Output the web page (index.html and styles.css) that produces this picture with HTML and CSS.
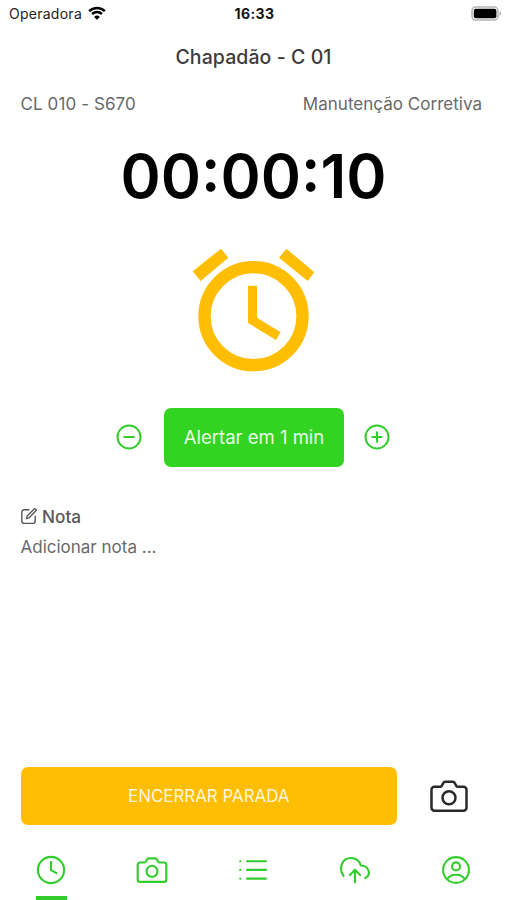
FILE: index.html
```html
<!DOCTYPE html>
<html lang="pt-BR">
<head>
<meta charset="utf-8">
<meta name="viewport" content="width=device-width, initial-scale=1">
<title>Chapadão - C 01</title>
<link rel="stylesheet" href="styles.css">
</head>
<body>
<div class="screen">
  <div class="status">
    <div class="carrier"><span class="carrier-name">Operadora</span>
      <svg class="wifi" viewBox="0 0 18 14"><path d="M1.2 5.1a11.2 11.2 0 0 1 15.6 0M4.1 8a7 7 0 0 1 9.8 0" fill="none" stroke="#000" stroke-width="2.5"/><path d="M9 13.8 6.1 10.9a4.2 4.2 0 0 1 5.8 0z"/></svg>
    </div>
    <span class="time">16:33</span>
    <svg class="battery" viewBox="0 0 31 15"><rect x="1" y="1" width="26" height="13" rx="3.8" fill="#fff" stroke="#b5b5b5" stroke-width="1.5"/><rect x="2.8" y="2.8" width="22.6" height="9.4" rx="2"/><path d="M28.5 5.3c2 .6 2 3.8 0 4.4z" fill="#aaa"/></svg>
  </div>
  <h1 class="title">Chapadão - C 01</h1>
  <div class="info"><span class="machine">CL 010 - S670</span><span class="kind">Manutenção Corretiva</span></div>
  <div class="timer">00:00:10</div>
  <svg class="alarm" viewBox="0 0 450 450"><circle cx="220.5" cy="243.5" r="147" fill="none" stroke="#ffbd03" stroke-width="37"/><path fill="#ffbd03" d="M204 152h27v96l71 44-14 23-84-51zM123 41l22 27-83 70-24-29zM319 41l84 71-20 26-86-70z"/></svg>
  <div class="alert">
    <svg class="step" viewBox="0 0 26 26"><circle cx="13" cy="13" r="11.5"/><path d="M8.2 13h9.6"/></svg>
    <button class="alert-button"><span class="alert-label">Alertar em 1 min</span></button>
    <svg class="step" viewBox="0 0 26 26"><circle cx="13" cy="13" r="11.5"/><path d="M8.2 13h9.6M13 8.2v9.6"/></svg>
  </div>
  <div class="note">
    <svg class="edit" viewBox="0 0 18 18"><path d="M9 2.8H4.2A2.4 2.4 0 0 0 1.8 5.2V14a2.4 2.4 0 0 0 2.4 2.4h8.6a2.4 2.4 0 0 0 2.4-2.4V9.3"/><path d="M7.1 9.1 13.9 2.3a1.25 1.25 0 0 1 1.8 1.8L8.9 10.9l-2.5.7z"/></svg>
    <span class="note-title">Nota</span>
  </div>
  <div class="note-text">Adicionar nota ...</div>
  <div class="actions">
    <button class="stop"><span class="stop-label">ENCERRAR PARADA</span></button>
    <svg class="photo" viewBox="0 0 38 32"><path d="M4.5 6.8h5.7q1 0 1.5-.9l1.7-3q.6-1.1 1.7-1.1h7.8q1.1 0 1.7 1.1l1.7 3q.5.9 1.5.9h5.7a3 3 0 0 1 3 3v17.9a3 3 0 0 1-3 3h-29a3 3 0 0 1-3-3V9.8a3 3 0 0 1 3-3z"/><circle cx="19" cy="17.7" r="6.5"/></svg>
  </div>
  <nav class="tabs">
    <div class="tab active"><svg class="icon" viewBox="0 0 32 32"><circle cx="16" cy="16" r="13.1"/><path d="M16 8v8.2l5.4 3"/></svg></div>
    <div class="tab"><svg class="icon" viewBox="0 0 32 32"><path d="M3.9 8.5h4.2q1.3 0 1.9-1.1l1-1.9q.6-1.1 1.9-1.1h6.2q1.3 0 1.9 1.1l1 1.9q.6 1.1 1.9 1.1h4.2a2.2 2.2 0 0 1 2.2 2.2v15a2.2 2.2 0 0 1-2.2 2.2H3.9a2.2 2.2 0 0 1-2.2-2.2v-15a2.2 2.2 0 0 1 2.2-2.2z"/><circle cx="16" cy="17.3" r="5.5"/></svg></div>
    <div class="tab"><svg class="icon" viewBox="0 0 32 32"><path d="M10 7.2h19M10 15.9h19M10 24.6h19M3.2 7.2h.1M3.2 15.9h.1M3.2 24.6h.1"/></svg></div>
    <div class="tab"><svg class="icon" viewBox="0 0 32 32"><path d="M4.5 21.8C-.2 15.7 1.9 4 12 4c5.1 0 8.5 3 9.7 7.500 8-.1 11.200 9.300 4.400 12.600M16 28.200V15.800M10.900 21l5.100-5.200 5.100 5.200"/></svg></div>
    <div class="tab"><svg class="icon" viewBox="0 0 32 32"><circle cx="16" cy="16" r="12.9"/><circle cx="16" cy="12.4" r="4"/><path d="M7.5 24.9c2.8-5.6 14.2-5.6 17 0"/></svg></div>
  </nav>
</div>
</body>
</html>
```
FILE: styles.css
```css
* { box-sizing: border-box; }
body { margin: 0; background: #fff; font-family: Inter, sans-serif; }
svg { display: block; flex: none; }
.screen { width: 507px; height: 900px; display: flex; flex-direction: column; overflow: hidden; }
.status { height: 28px; display: grid; grid-template-columns: 1fr auto 1fr; align-items: center; padding: 0 7px 2px 9px; color: #222; }
.carrier { display: flex; align-items: center; gap: 6px; font-size: 14px; letter-spacing: 0.26px; }
.wifi { width: 18px; height: 14px; }
.time { font-size: 14px; font-weight: 700; letter-spacing: 0.45px; color: #111; }
.battery { width: 31px; height: 15px; justify-self: end; margin-right: -2px; }
.title { margin: 0; height: 58px; line-height: 59px; text-align: center; font-size: 19.5px; letter-spacing: 0.07px; font-weight: 500; color: #3b3b3e; }
.info { height: 36px; display: flex; justify-content: space-between; align-items: center; padding: 0 25px 0 20.5px; font-size: 17px; letter-spacing: 0.02px; color: #68686b; }
.machine { letter-spacing: 0.1px; }
.timer { height: 110px; line-height: 109px; text-align: center; font-size: 61px; font-weight: 600; color: #000; }
.alarm { width: 150px; height: 150px; margin: 3px 0 0 180px; }
.alert { display: flex; align-items: center; gap: 22px; height: 59px; margin: 23px 0 0 116px; }
.step { width: 26px; height: 26px; margin-top: -2px; fill: none; stroke: #32cc2c; stroke-width: 2; stroke-linecap: round; }
.step:last-child { margin-left: -2px; }
button { border: 0; padding: 0; font-family: inherit; border-radius: 7px; color: #fff; }
.alert-button { width: 180px; height: 59px; padding-bottom: 2px; background: #33d321; font-size: 18.5px; color: #e9fde7; }
.note { display: flex; align-items: center; gap: 4px; height: 32px; margin: 33px 0 0 20px; font-size: 17.2px; font-weight: 500; color: #57575a; }
.edit { width: 18px; height: 18px; fill: none; stroke: #57575a; stroke-width: 1.4; stroke-linejoin: round; stroke-linecap: round; }
.note-text { height: 30px; line-height: 30px; padding-left: 20.5px; font-size: 17px; color: #68686b; }
.actions { display: flex; align-items: center; gap: 33px; height: 59px; margin: auto 0 0 20.5px; }
.stop { width: 376.5px; height: 58.5px; background: #ffbd03; font-size: 16.9px; color: #fff6dc; }
.photo { width: 38px; height: 32px; fill: none; stroke: #29292d; stroke-width: 2.5; }
.tabs { height: 74.5px; display: grid; grid-template-columns: repeat(5, 1fr); }
.tab { display: flex; flex-direction: column; align-items: center; padding-top: 28px; }
.active::after { content: ""; width: 31px; height: 4px; margin: 10px 0 0 1.5px; background: #32cc2c; }
.icon { width: 32px; height: 32px; fill: none; stroke: #32cc2c; stroke-width: 2.1; stroke-linecap: round; stroke-linejoin: round; }
```
